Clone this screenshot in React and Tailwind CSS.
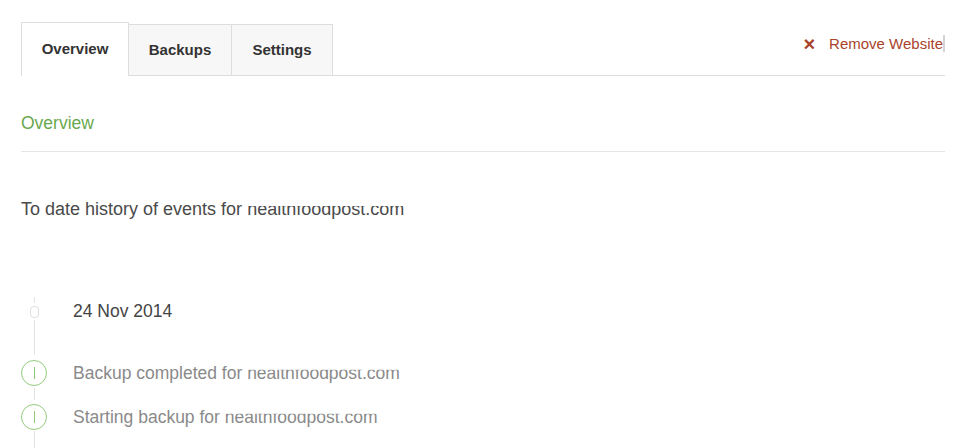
import React from "react";

const font = { fontFamily: '"Liberation Sans", Arial, sans-serif' };

function Domain() {
  return (
    <span className="[clip-path:inset(0.39em_0_0_0)]">healthfoodpost.com</span>
  );
}

function Tabs() {
  return (
    <div className="flex items-end justify-between border-b border-[#dddddd]">
      <div className="flex items-end">
        <div className="-mb-px flex h-[54px] w-[108px] items-center justify-center border border-b-0 border-[#dddddd] bg-white text-[15px] font-bold text-[#333333]">
          Overview
        </div>
        <div className="-mb-px flex h-[52px] w-[103px] items-center justify-center border border-l-0 border-[#dddddd] bg-[#f7f7f7] pt-[1px] text-[15px] font-bold text-[#333333]">
          Backups
        </div>
        <div className="-mb-px flex h-[52px] w-[101px] items-center justify-center border border-l-0 border-[#dddddd] bg-[#f7f7f7] pt-[1px] text-[15px] font-bold text-[#333333]">
          Settings
        </div>
      </div>
      <div className="mb-[20px] flex items-center text-[15px] text-[#a9432b]">
        <span className="mr-[14px] text-[20px] font-bold leading-none">×</span>
        <span>Remove Website</span>
        <span className="h-[17px] w-[2px] bg-[#d4d4d4]"></span>
      </div>
    </div>
  );
}

function Circle() {
  return (
    <div className="flex h-[26px] w-[26px] items-center justify-center rounded-full border-[1.5px] border-[#93cb7c]">
      <div className="h-[12px] w-px bg-[#8fc878]"></div>
    </div>
  );
}

function Timeline() {
  return (
    <div className="mt-[78px]">
      <div className="flex">
        <div className="flex w-[26px] flex-col items-center">
          <div className="h-[6px] w-px bg-[#e2e2e2]"></div>
          <div className="mt-[3px] h-[12px] w-[9px] rounded-[4px] border border-[#e0e0e0]"></div>
          <div className="mt-[2px] h-[35px] w-px bg-[#e2e2e2]"></div>
        </div>
        <div className="ml-[26px] mt-[4px] text-[17.5px] leading-[20px] text-[#444444]">
          24 Nov 2014
        </div>
      </div>
      <div className="mt-[5px] flex items-center">
        <Circle />
        <div className="ml-[26px] text-[17.5px] leading-[20px] text-[#8a8a8a]">
          Backup completed for <Domain />
        </div>
      </div>
      <div className="flex w-[26px] justify-center">
        <div className="mt-[2px] h-[12px] w-px bg-[#e2e2e2]"></div>
      </div>
      <div className="mt-[4px] flex items-center">
        <Circle />
        <div className="ml-[26px] text-[17.5px] leading-[20px] text-[#8a8a8a]">
          Starting backup for <Domain />
        </div>
      </div>
      <div className="flex w-[26px] justify-center">
        <div className="mt-px h-[20px] w-px bg-[#e2e2e2]"></div>
      </div>
    </div>
  );
}

export default function App() {
  return (
    <div className="h-[448px] w-[961px] overflow-hidden bg-white" style={font}>
      <div className="ml-[21px] w-[924px] pt-[22px]">
        <Tabs />
        <div className="mt-[37px] border-b border-[#e5e5e5] pb-[18px] text-[17.5px] leading-[20px] text-[#6aa84f]">
          Overview
        </div>
        <div className="mt-[47px] text-[18px] leading-[20px] text-[#4a4a4a]">
          To date history of events for <Domain />
        </div>
        <Timeline />
      </div>
    </div>
  );
}
